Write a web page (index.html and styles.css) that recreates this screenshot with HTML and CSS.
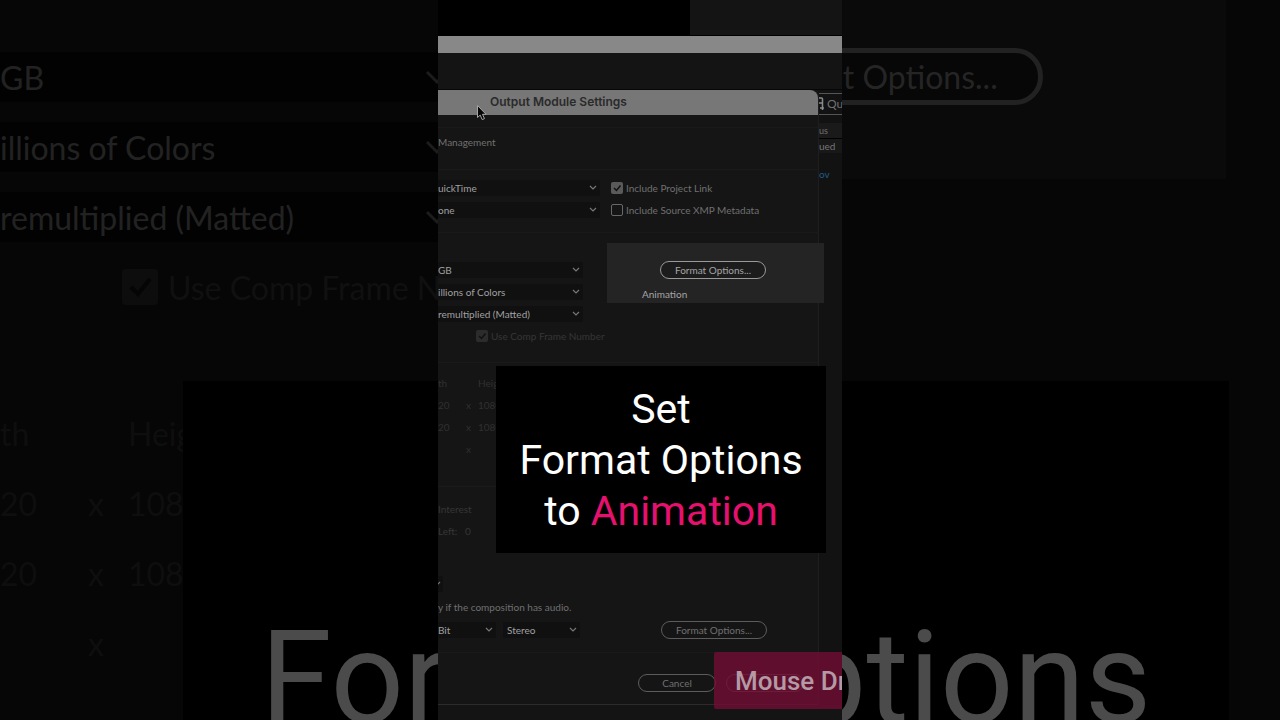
FILE: index.html
```
<!DOCTYPE html>
<html lang="en">

<head>
  <meta charset="UTF-8" />
  <meta name="viewport" content="width=device-width, initial-scale=1.0" />
  <title>Output Module Settings</title>
  <link rel="stylesheet" href="styles.css">
</head>

<body>
  <div class="stage">

    <!-- enlarged, darkened copy behind the clip -->
    <div class="backdrop">
      <div class="back-top">
        <div class="back-fields">
          <div class="back-row"><select class="back-select" aria-label="Channels"><option>GB</option></select></div>
          <div class="back-row"><select class="back-select" aria-label="Depth"><option>illions of Colors</option></select></div>
          <div class="back-row"><select class="back-select" aria-label="Color"><option>remultiplied (Matted)</option></select></div>
          <div class="back-row back-check">
            <input type="checkbox" id="back-comp" checked disabled>
            <label for="back-comp">Use Comp Frame Number</label>
          </div>
        </div>
        <div class="back-light">
          <button class="back-btn">Format Options...</button>
        </div>
      </div>
      <table class="back-sizes">
        <tr><td>th</td><td></td><td>Height</td></tr>
        <tr><td>20</td><td>x</td><td>1080</td></tr>
        <tr><td>20</td><td>x</td><td>1080</td></tr>
        <tr><td></td><td>x</td><td></td></tr>
      </table>
      <div class="back-caption">Set<br>Format Options</div>
    </div>

    <div class="clip">
      <div class="preview"><div class="preview-black"></div></div>
      <div class="light-bar"></div>
      <div class="dark-bar"></div>

      <div class="windows">
        <div class="dialog">
          <h1 class="title">Output Module Settings</h1>

          <div class="group tabs">
            <div class="row">Management</div>
          </div>

          <div class="group format">
            <div class="row">
              <select class="field" aria-label="Format"><option>uickTime</option></select>
              <input type="checkbox" id="link" checked>
              <label for="link">Include Project Link</label>
            </div>
            <div class="row">
              <select class="field" aria-label="Post-render action"><option>one</option></select>
              <input type="checkbox" id="xmp">
              <label for="xmp">Include Source XMP Metadata</label>
            </div>
          </div>

          <div class="group video">
            <div class="video-fields">
              <div class="row"><select class="field" aria-label="Channels"><option>GB</option></select></div>
              <div class="row"><select class="field" aria-label="Depth"><option>illions of Colors</option></select></div>
              <div class="row"><select class="field" aria-label="Color"><option>remultiplied (Matted)</option></select></div>
              <div class="row comp-number">
                <input type="checkbox" id="comp" checked disabled>
                <label for="comp">Use Comp Frame Number</label>
              </div>
            </div>
            <div class="highlight">
              <button class="btn">Format Options...</button>
              <p class="codec">Animation</p>
            </div>
          </div>

          <div class="group resize">
            <table class="sizes">
              <tr><td>th</td><td></td><td>Height</td></tr>
              <tr><td>20</td><td>x</td><td>1080</td></tr>
              <tr><td>20</td><td>x</td><td>1080</td></tr>
              <tr><td></td><td>x</td><td></td></tr>
            </table>
          </div>

          <div class="group crop">
            <div class="row">Interest</div>
            <div class="row">Left: &nbsp; 0</div>
          </div>

          <div class="audio">
            <div class="row audio-head"><select class="field" aria-label="Audio output"><option></option></select></div>
            <div class="row audio-note">y if the composition has audio.</div>
            <div class="row audio-fields">
              <select class="field bit" aria-label="Bit depth"><option>Bit</option></select>
              <select class="field channels" aria-label="Audio channels"><option>Stereo</option></select>
              <button class="btn">Format Options...</button>
            </div>
          </div>

          <div class="group footer">
            <button class="btn">Cancel</button>
            <button class="btn" aria-label="OK"></button>
          </div>
        </div>

        <div class="queue">
          <button class="queue-btn">
            <svg width="5" height="16" viewBox="0 0 5 16"><path d="M0 2h2.500q1 0 1 1v8M0 7h3M3.500 10v4M1 12h4" fill="none" stroke="#8a8a8a" stroke-width="1.500"/></svg>
            Qu
          </button>
          <div class="queue-head">us</div>
          <div class="queue-item">ued</div>
          <a class="queue-file" href="#">ov</a>
        </div>
      </div>

      <div class="caption">Set<br>Format Options<br>to <span class="pink">Animation</span></div>
      <div class="mouse-tag">Mouse Drag</div>
      <svg class="cursor" width="12" height="18" viewBox="0 0 12 18"><path d="M1.500 1.500v12l2.700-2.400 2 4.500 2.300-1-2-4.300h3.500z" fill="#050505" stroke="#a5a5a5"/></svg>
    </div>

  </div>
</body>

</html>
```
FILE: styles.css
```
html, body, h1, p {
  margin: 0;
  padding: 0;
}
* {
  box-sizing: border-box;
}
body {
  background: #060606;
  font-family: Lato, "Open Sans", sans-serif;
}
select, button, input {
  margin: 0;
  font: inherit;
  color: inherit;
}
select, input {
  appearance: none;
}
select, button {
  padding: 0;
  border: 0;
  background: none;
}
table {
  border-collapse: collapse;
}
td {
  padding: 0;
}

/* backdrop and clip share one cell, the clip lies on top */
.stage {
  display: grid;
  height: 100vh;
  overflow: hidden;
}
.backdrop, .clip {
  grid-area: 1 / 1;
  position: relative;
  overflow: hidden;
}

.backdrop {
  font-size: 32px;
  color: #222;
}
.back-top {
  display: flex;
  justify-content: space-between;
  margin-right: 54px;
}
.back-fields {
  width: 460px;
  padding-top: 42px;
}
.back-row {
  display: flex;
  align-items: center;
  height: 70px;
}
.back-select {
  width: 100%;
  height: 50px;
  background: #020202 url("data:image/svg+xml,%3Csvg xmlns='http://www.w3.org/2000/svg' width='26' height='16'%3E%3Cpath d='M3 3l10 10 10-10' fill='none' stroke='%231c1c1c' stroke-width='3'/%3E%3C/svg%3E") no-repeat right 10px center;
}
.back-check {
  gap: 10px;
  padding-left: 122px;
  color: #101010;
  white-space: nowrap;
}
.back-check input {
  flex: none;
  width: 36px;
  height: 36px;
  border-radius: 4px;
  background: #0d0d0d url("data:image/svg+xml,%3Csvg xmlns='http://www.w3.org/2000/svg' width='36' height='36'%3E%3Cpath d='M9 18l7 7 12-15' fill='none' stroke='%23050505' stroke-width='4'/%3E%3C/svg%3E");
}
.back-light {
  display: flex;
  align-items: flex-start;
  justify-content: flex-end;
  width: 686px;
  height: 179px;
  padding: 48px 183px 0 0;
  background: #0a0a0a;
}
.back-btn {
  width: 334px;
  height: 57px;
  border: 5px solid #222;
  border-radius: 28px;
  background: #070707;
  color: #252525;
}
.back-sizes {
  margin-top: 76px;
  table-layout: fixed;
  width: 240px;
  color: #0e0e0e;
}
.back-sizes tr {
  height: 70px;
}
.back-sizes td:first-child {
  width: 88px;
}
.back-sizes td:nth-child(2) {
  width: 40px;
}
.back-caption {
  position: absolute;
  left: 183px;
  right: 51px;
  top: 381px;
  padding-top: 58px;
  background: #000;
  color: #4b4b4b;
  font: 400 129px/160px Roboto, sans-serif;
  text-align: center;
}

.clip {
  justify-self: center;
  width: 404px;
  background: #141414;
  color: #707070;
  font-size: 10px;
  line-height: 14px;
}
.preview {
  height: 36px;
  border-bottom: 1px solid #000;
}
.preview-black {
  width: 252px;
  height: 35px;
  background: #000;
}
.light-bar {
  height: 17px;
  background: #888;
}
.dark-bar {
  height: 37px;
  border-bottom: 1px solid #060606;
}
.windows {
  display: flex;
}
.dialog {
  flex: 1;
  border-right: 1px solid #1e1e1e;
  border-bottom: 1px solid #2c2c2c;
  border-radius: 0 8px 0 0;
  background: #151515;
}
.title {
  height: 25px;
  padding-left: 52px;
  border-radius: 0 8px 0 0;
  background: #777;
  color: #2a2a2a;
  font: 600 12px/24px Inter, sans-serif;
}
.group {
  border-top: 1px solid #1a1a1a;
}
.row {
  display: flex;
  align-items: center;
  height: 22px;
}
.row label {
  margin-left: 3px;
}
.row input {
  flex: none;
  width: 12px;
  height: 12px;
  border: 1px solid #686868;
  border-radius: 2px;
}
.row input:checked {
  border: 0;
  background: #5a5a5a url("data:image/svg+xml,%3Csvg xmlns='http://www.w3.org/2000/svg' width='12' height='12'%3E%3Cpath d='M3 6l2.500 2.500 4-5' fill='none' stroke='%23111' stroke-width='1.500'/%3E%3C/svg%3E");
}
.field {
  height: 16px;
  background: #101010 url("data:image/svg+xml,%3Csvg xmlns='http://www.w3.org/2000/svg' width='8' height='6'%3E%3Cpath d='M1 1l3 3 3-3' fill='none' stroke='%23777' stroke-width='1.200'/%3E%3C/svg%3E") no-repeat right 3px center;
  color: #a0a0a0;
}
.btn {
  height: 18px;
  border: 1px solid #5c5c5c;
  border-radius: 9px;
}

.tabs {
  margin-top: 12px;
  padding-top: 3px;
}
.format {
  margin-top: 16px;
  padding-top: 7px;
}
.format .field {
  width: 162px;
  margin-right: 11px;
}
.video {
  display: flex;
  justify-content: space-between;
  margin: 11px -6px 0 0;
  padding-top: 10px;
}
.video-fields {
  width: 145px;
  padding-top: 16px;
}
.video-fields .field {
  width: 100%;
}
.comp-number {
  padding-left: 38px;
  color: #363636;
  white-space: nowrap;
}
.comp-number input:checked {
  background-color: #2c2c2c;
}
.highlight {
  position: relative;
  width: 217px;
  height: 60px;
  padding-top: 18px;
  background: #242424;
  color: #a4a4a4;
}
.highlight .btn {
  display: block;
  width: 106px;
  margin-left: 53px;
  border-color: #999;
  background: #1c1c1c;
}
.codec {
  margin: 8px 0 0 35px;
}
.resize {
  margin-top: 15px;
  padding-top: 9px;
}
.sizes {
  table-layout: fixed;
  width: 80px;
  color: #303030;
}
.sizes tr {
  height: 22px;
}
.sizes td:first-child {
  width: 28px;
}
.sizes td:nth-child(2) {
  width: 12px;
}
.crop {
  margin-top: 26px;
  padding-top: 11px;
  color: #363636;
}
.audio {
  margin-top: 31px;
}
.audio-head .field {
  width: 5px;
  background-position: right 2px center;
}
.audio-note {
  height: 24px;
}
.bit {
  width: 58px;
}
.channels {
  width: 77px;
  margin-left: 7px;
  padding-left: 4px;
}
.audio-fields .btn {
  width: 106px;
  margin-left: 81px;
}
.footer {
  display: flex;
  justify-content: flex-end;
  gap: 10px;
  margin-top: 11px;
  padding: 21px 14px 12px 0;
}
.footer .btn {
  width: 78px;
}

.queue {
  width: 23px;
  overflow: hidden;
  background: #121212;
  white-space: nowrap;
}
.queue-btn {
  display: flex;
  align-items: center;
  gap: 3px;
  width: 40px;
  height: 22px;
  margin-top: 3px;
  border: solid #555;
  border-width: 1px 0;
  font-size: 12px;
}
.queue-head {
  margin-top: 8px;
  border-bottom: 1px solid #000;
  background: #1a1a1a;
  font-size: 9px;
  line-height: 15px;
}
.queue-item {
  background: #181818;
  color: #777;
}
.queue-file {
  display: block;
  margin-top: 14px;
  color: #205a88;
  text-decoration: none;
}

.caption {
  position: absolute;
  left: 58px;
  top: 366px;
  width: 330px;
  padding: 18px 0 16px;
  background: #000;
  color: #fff;
  font: 400 41px/51px Roboto, sans-serif;
  text-align: center;
}
.pink {
  color: #e6116f;
}
.mouse-tag {
  position: absolute;
  left: 276px;
  top: 652px;
  padding: 2px 0 0 21px;
  border-radius: 2px;
  background: rgba(114, 14, 51, .8);
  color: #b39aa5;
  font: 500 26px/55px Roboto, sans-serif;
  white-space: nowrap;
}
.cursor {
  position: absolute;
  left: 38px;
  top: 104px;
}
```
